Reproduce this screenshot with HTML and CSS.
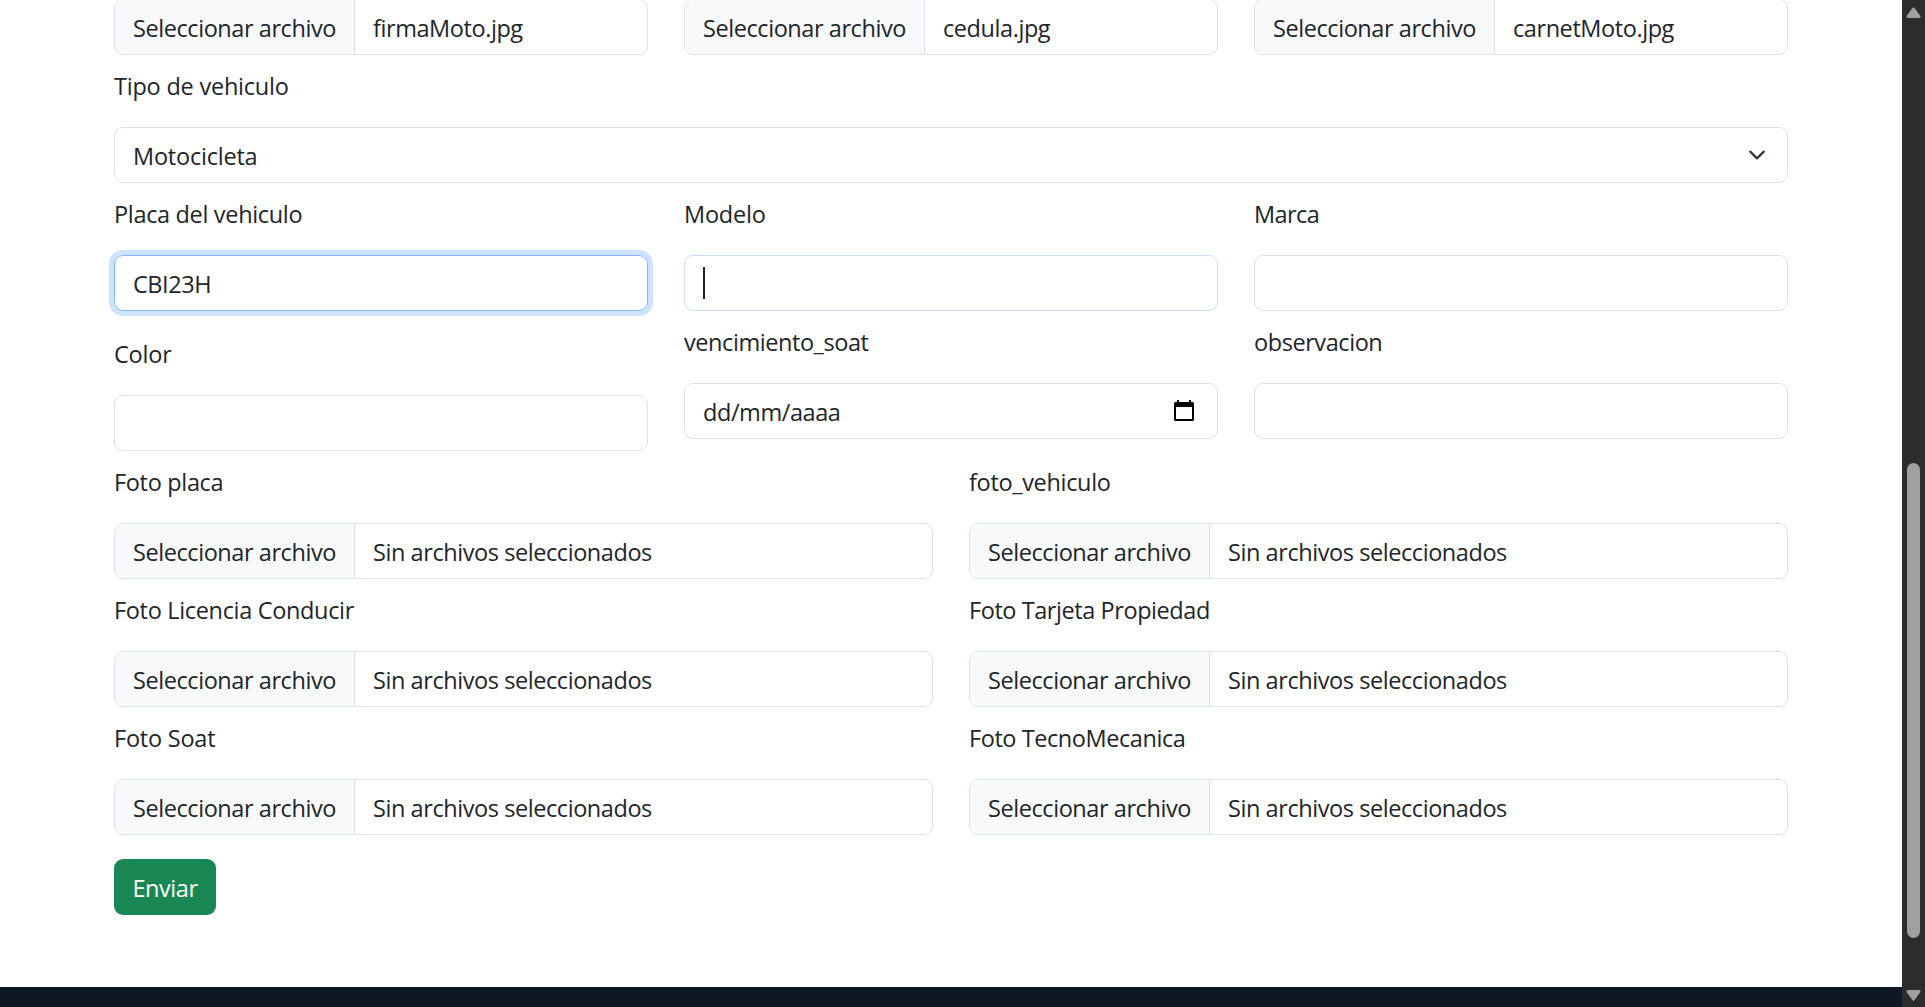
FILE: index.html
```html
<!DOCTYPE html>
<html lang="es">
<head>
<meta charset="utf-8">
<title>Registro de vehiculo</title>
<link rel="stylesheet" href="styles.css">
</head>
<body>
<div class="page">
  <form class="form">
    <div class="row thirds">
      <div class="file"><span class="choose">Seleccionar archivo</span><span class="filename">firmaMoto.jpg</span></div>
      <div class="file"><span class="choose">Seleccionar archivo</span><span class="filename">cedula.jpg</span></div>
      <div class="file"><span class="choose">Seleccionar archivo</span><span class="filename">carnetMoto.jpg</span></div>
    </div>
    <div class="field">
      <label class="label wide">Tipo de vehiculo</label>
      <div class="control split wide"><span>Motocicleta</span>
        <svg class="chevron" viewBox="0 0 16 16"><path d="m2 5 6 6 6-6" fill="none" stroke="#343a40" stroke-width="2" stroke-linecap="round" stroke-linejoin="round"/></svg>
      </div>
    </div>
    <div class="row thirds">
      <div class="field"><label class="label loose">Placa del vehiculo</label><div class="control focused">CBI23H</div></div>
      <div class="field"><label class="label wide">Modelo</label><div class="control entering"><span class="caret"></span></div></div>
      <div class="field"><label class="label tight">Marca</label><div class="control"></div></div>
    </div>
    <div class="row thirds">
      <div class="field lowered"><label class="label wide">Color</label><div class="control"></div></div>
      <div class="field"><label class="label">vencimiento_soat</label>
        <div class="control split"><span class="date">dd/mm/aaaa</span>
          <svg class="calendar" viewBox="0 0 20 21"><path fill-rule="evenodd" d="M3 0h2v2h10V0h2v2h1.500q1.500 0 1.500 1.500v16q0 1.500-1.500 1.500h-17Q0 21 0 19.500v-16Q0 2 1.500 2H3zM2 7v12h16V7z"/></svg>
        </div>
      </div>
      <div class="field"><label class="label">observacion</label><div class="control"></div></div>
    </div>
    <div class="row halves">
      <div class="field"><label class="label loose">Foto placa</label><div class="file"><span class="choose">Seleccionar archivo</span><span class="filename">Sin archivos seleccionados</span></div></div>
      <div class="field"><label class="label loose">foto_vehiculo</label><div class="file"><span class="choose">Seleccionar archivo</span><span class="filename">Sin archivos seleccionados</span></div></div>
      <div class="field"><label class="label loose">Foto Licencia Conducir</label><div class="file"><span class="choose">Seleccionar archivo</span><span class="filename">Sin archivos seleccionados</span></div></div>
      <div class="field"><label class="label">Foto Tarjeta Propiedad</label><div class="file"><span class="choose">Seleccionar archivo</span><span class="filename">Sin archivos seleccionados</span></div></div>
      <div class="field"><label class="label wide">Foto Soat</label><div class="file"><span class="choose">Seleccionar archivo</span><span class="filename">Sin archivos seleccionados</span></div></div>
      <div class="field"><label class="label">Foto TecnoMecanica</label><div class="file"><span class="choose">Seleccionar archivo</span><span class="filename">Sin archivos seleccionados</span></div></div>
    </div>
    <button class="submit" type="button">Enviar</button>
  </form>
  <footer class="footer"></footer>
</div>
<div class="scrollbar">
  <svg class="arrow" viewBox="0 0 15 11"><path d="M6.200 1.200q1.300-1.700 2.600 0l5.400 7.600q1 1.700-.9 2.200H1.700q-1.900-.5-.9-2.200z" fill="#9f9f9f"/></svg>
  <div class="thumb"></div>
  <svg class="arrow" viewBox="0 0 15 11"><path d="M6.200 9.800q1.300 1.700 2.600 0l5.400-7.600q1-1.700-.9-2.200H1.700Q-.2.500.8 2.200z" fill="#9f9f9f"/></svg>
</div>
</body>
</html>
```
FILE: styles.css
```css
* { box-sizing: border-box; }
body {
  margin: 0;
  height: 1007px;
  display: flex;
  overflow: hidden;
  background: #fff;
  color: #212529;
  font: 23.5px/36px "Open Sans", "Noto Sans", sans-serif;
  letter-spacing: -0.43px;
}
.page {
  width: 1902px;
  height: 1007px;
  display: flex;
  flex-direction: column;
  overflow: hidden;
}
.form {
  height: 988px;
  margin-top: -1px;
  padding: 0 114px;
  flex-shrink: 0;
}
.row { display: grid; column-gap: 36px; }
.thirds { grid-template-columns: repeat(3, 1fr); }
.halves { grid-template-columns: repeat(2, 1fr); }
.field { padding-top: 12px; }
.lowered { padding-top: 24px; }
.label { display: block; height: 60px; padding-top: 1px; white-space: nowrap; }
.wide { letter-spacing: -0.22px; }
.loose { letter-spacing: -0.33px; }
.tight { letter-spacing: -0.6px; }
.control, .file {
  height: 56px;
  border: 1px solid #dee2e6;
  border-radius: 9px;
  white-space: nowrap;
}
.control { padding: 10px 18px 8px; }
.file { display: flex; overflow: hidden; }
.choose {
  width: 240px;
  padding: 10px 0 0 18px;
  background: #f8f9fa;
  border-right: 1px solid #dee2e6;
}
.filename { padding: 10px 0 0 18px; }
.focused { border-color: #86b7fe; box-shadow: 0 0 0 5px #cfe2ff; }
.entering { border-color: #cddcf3; padding-top: 11px; }
.caret { display: block; width: 2px; height: 32px; background: #212529; }
.split { display: flex; justify-content: space-between; }
.chevron { width: 24px; height: 18px; margin-top: 8px; }
.calendar { width: 20px; height: 21px; margin: 6px 5px 0 0; }
.submit {
  display: block;
  width: 102px;
  height: 56px;
  margin-top: 24px;
  padding: 1px 0 0;
  border: 0;
  border-radius: 9px;
  background: #198754;
  color: #fff;
  font: inherit;
  letter-spacing: inherit;
}
.footer { height: 20px; background: #0f1724; flex-shrink: 0; }
.scrollbar {
  width: 23px;
  height: 1007px;
  padding: 7px 0 6px;
  background: #2c2c2c;
  display: flex;
  flex-direction: column;
  align-items: center;
}
.arrow { width: 15px; height: 11px; }
.thumb {
  width: 13px;
  height: 475px;
  margin: 445px 0 auto;
  border-radius: 7px;
  background: #9f9f9f;
}
```
